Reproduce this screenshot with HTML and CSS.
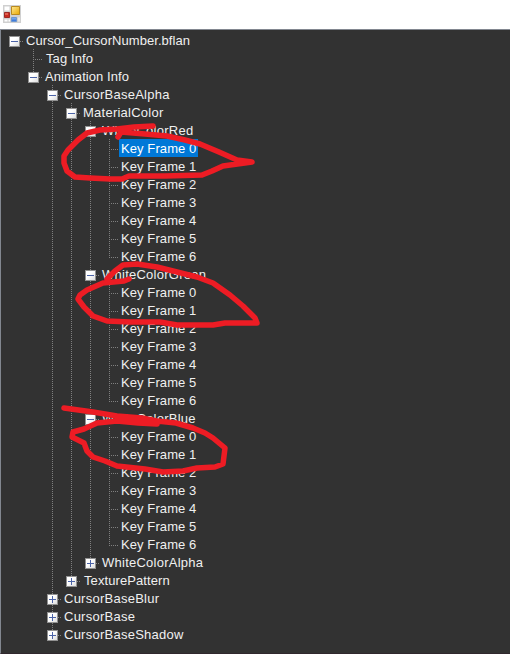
FILE: index.html
```html
<!DOCTYPE html>
<html lang="en">
<head>
<meta charset="utf-8">
<title>Animation editor</title>
<link rel="stylesheet" href="styles.css">
</head>
<body>
<header class="titlebar">
  <svg class="app-icon" width="18" height="18" viewBox="0 0 18 18">
    <defs>
      <linearGradient id="gold" x2="1" y2="1"><stop stop-color="#ffe994"/><stop offset="1" stop-color="#e9a800"/></linearGradient>
      <linearGradient id="blue" x2="0" y2="1"><stop stop-color="#88b8f5"/><stop offset="1" stop-color="#2869d5"/></linearGradient>
    </defs>
    <path fill="#d0d0d0" d="M0 0h18v18H0z"/>
    <path fill="#fff" d="M1.500 1.500h5v4h-5zM1.500 14.500h3v2h-3zM5.500 14.500h1.500v2h-1.500zM15.500 12.500h1v4h-1z"/>
    <path fill="url(#gold)" stroke="#b98a20" d="M8.500 1.500h8v8h-8z"/>
    <path fill="#c92b20" stroke="#9b2924" d="M1.500 7.500h5v5h-5z"/>
    <path fill="#e06050" d="M2 8h3v2H2z"/>
    <path fill="url(#blue)" stroke="#6c96d0" d="M8.500 12.500h5v4h-5z"/>
  </svg>
</header>
<main class="panel">
  <ul class="tree">
    <li class="open"><span class="compact">Cursor_CursorNumber.bflan</span>
      <ul>
        <li><span class="tag">Tag Info</span></li>
        <li class="open"><span class="compact">Animation Info</span>
          <ul>
            <li class="open"><span>CursorBaseAlpha</span>
              <ul>
                <li class="open"><span>MaterialColor</span>
                  <ul>
                    <li class="open"><span>WhiteColorRed</span>
                      <ul class="frames">
                        <li><span class="selected">Key Frame 0</span></li>
                        <li><span>Key Frame 1</span></li>
                        <li><span>Key Frame 2</span></li>
                        <li><span>Key Frame 3</span></li>
                        <li><span>Key Frame 4</span></li>
                        <li><span>Key Frame 5</span></li>
                        <li><span>Key Frame 6</span></li>
                      </ul>
                    </li>
                    <li class="open"><span>WhiteColorGreen</span>
                      <ul class="frames">
                        <li><span>Key Frame 0</span></li>
                        <li><span>Key Frame 1</span></li>
                        <li><span>Key Frame 2</span></li>
                        <li><span>Key Frame 3</span></li>
                        <li><span>Key Frame 4</span></li>
                        <li><span>Key Frame 5</span></li>
                        <li><span>Key Frame 6</span></li>
                      </ul>
                    </li>
                    <li class="open"><span>WhiteColorBlue</span>
                      <ul class="frames">
                        <li><span>Key Frame 0</span></li>
                        <li><span>Key Frame 1</span></li>
                        <li><span>Key Frame 2</span></li>
                        <li><span>Key Frame 3</span></li>
                        <li><span>Key Frame 4</span></li>
                        <li><span>Key Frame 5</span></li>
                        <li><span>Key Frame 6</span></li>
                      </ul>
                    </li>
                    <li class="closed"><span>WhiteColorAlpha</span></li>
                  </ul>
                </li>
                <li class="closed"><span class="tag">TexturePattern</span></li>
              </ul>
            </li>
            <li class="closed"><span>CursorBaseBlur</span></li>
            <li class="closed"><span>CursorBase</span></li>
            <li class="closed"><span>CursorBaseShadow</span></li>
          </ul>
        </li>
      </ul>
    </li>
  </ul>
</main>
<svg class="ink" width="510" height="654" viewBox="0 0 510 654">
  <path d="M153 126L134 127L117 129L100 130L87 133L78 140L68 150L64 156L64 163L67 171L75 177L90 178L110 179L122 179L129 176L165 176L202 175L212 171L223 166L252 162L237 160L219 152L200 144L185 140L167 136L145 134L121 132L118 137"/>
  <path d="M129 279L124 281L103 283L87 290L80 295L78 299L84 307L93 316L107 321L130 322L160 322L177 325L213 325L225 323L257 323L255 318L243 306L230 295L213 283L197 277L177 272L157 267L137 264L123 265L115 271L107 279"/>
  <path d="M64 408L93 412L117 416L142 418L157 421L157 424L138 423L117 421L97 423L84 429L73 432L72 437L84 443L87 451L93 457L105 461L117 466L145 469L163 472L183 471L197 468L215 467L223 464L225 448L213 438L205 433L193 428L176 423L157 421"/>
</svg>
</body>
</html>
```

FILE: styles.css
```css
*, *::before, *::after { box-sizing: border-box; }
body {
  margin: 0;
  height: 654px;
  display: flex;
  flex-direction: column;
  overflow: hidden;
  background: #fff;
  font: 13px/18px "Liberation Sans", Arial, sans-serif;
  color: #f0f0f0;
}
.titlebar { height: 29px; padding: 5px 3px; }
.app-icon { display: block; }
.panel {
  flex: 1;
  padding: 1px 0 0 8px;
  background: #323232;
  border: 1px solid #828790;
  border-right: 0;
  border-bottom-color: #30272d;
}
ul { list-style: none; margin: 0; padding: 0; }
li { position: relative; }
li > ul { margin-left: 19px; }
span {
  display: block;
  width: max-content;
  height: 18px;
  margin-left: 15px;
  padding: 0 2px;
  line-height: 20px;
  white-space: nowrap;
  letter-spacing: 0.25px;
}
.compact { letter-spacing: 0.06px; }
.tag { padding-left: 3px; letter-spacing: 0.09px; }
.frames span { letter-spacing: 0.09px; }
.selected { background: #0078d7; color: #fff; }

/* dotted connectors */
li::before {
  content: "";
  position: absolute;
  left: 5px;
  top: 0;
  width: 10px;
  height: 100%;
  background:
    repeating-linear-gradient(to bottom, #808080 0 1px, transparent 1px 2px) 0 0 / 1px 100% no-repeat,
    repeating-linear-gradient(to right, #808080 0 1px, transparent 1px 2px) 0 10px / 10px 1px no-repeat;
}
li:last-child::before { height: 11px; }
.tree > li:last-child::before {
  top: 10px;
  height: 1px;
  background: repeating-linear-gradient(to right, #808080 0 1px, transparent 1px 2px);
}

/* expand and collapse boxes */
.open::after, .closed::after {
  content: "";
  position: absolute;
  left: 0;
  top: 5px;
  width: 11px;
  height: 11px;
  border: 1px solid #919191;
  background:
    linear-gradient(#4b63a7, #4b63a7) 50% 50% / 7px 1px no-repeat,
    linear-gradient(135deg, #fff 40%, #ddd);
}
.closed::after {
  background:
    linear-gradient(#4b63a7, #4b63a7) 50% 50% / 7px 1px no-repeat,
    linear-gradient(#4b63a7, #4b63a7) 50% 50% / 1px 7px no-repeat,
    linear-gradient(135deg, #fff 40%, #ddd);
}

/* freehand marks over the tree */
.ink {
  position: absolute;
  inset: 0;
  pointer-events: none;
  fill: none;
  stroke: #ed1c24;
  stroke-width: 5.500;
  stroke-linecap: round;
  stroke-linejoin: round;
}
```
